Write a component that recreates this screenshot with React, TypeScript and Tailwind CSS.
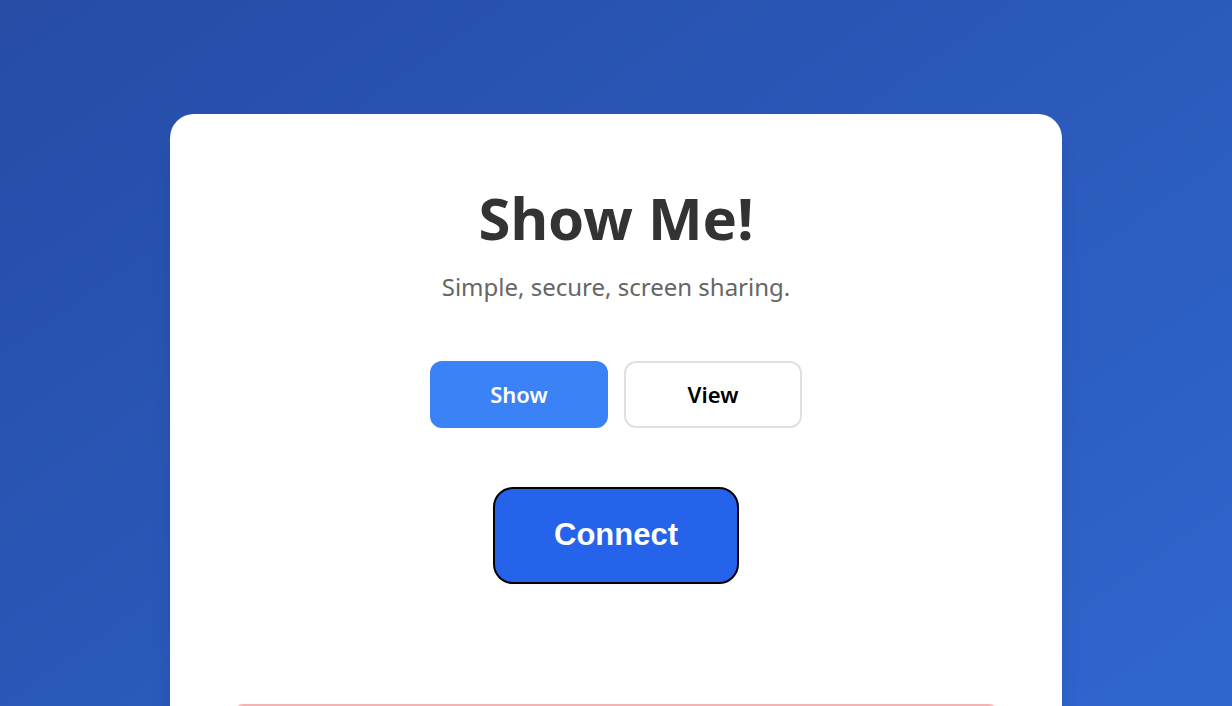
import React, { useState } from 'react';

function App() {
  const [mode, setMode] = useState<'show' | 'view'>('show');

  return (
    <div className="min-h-screen bg-gradient-to-br from-[#264ca6] to-[#3069d2] px-[170px] pt-[114px] pb-10 font-['Noto_Sans',sans-serif]">
      {/* Card */}
      <div className="bg-white rounded-[24px] shadow-xl px-[65px] pt-[72px] pb-12 flex flex-col items-center">
        <h1 className="text-[58px] leading-[64px] font-bold text-[#333333]">Show Me!</h1>
        <p className="mt-[21px] text-[24px] leading-[32px] text-[#666666]">Simple, secure, screen sharing.</p>

        {/* Mode toggle */}
        <div className="mt-[58px] flex gap-4">
          <button
            onClick={() => setMode('show')}
            className={`w-[178px] h-[67px] rounded-xl text-[22px] font-semibold border-2 ${
              mode === 'show' ? 'bg-[#3b82f6] border-[#3b82f6] text-white' : 'bg-white border-[#e0e0e0] text-black'
            }`}
          >
            Show
          </button>
          <button
            onClick={() => setMode('view')}
            className={`w-[178px] h-[67px] rounded-xl text-[22px] font-semibold border-2 ${
              mode === 'view' ? 'bg-[#3b82f6] border-[#3b82f6] text-white' : 'bg-white border-[#e0e0e0] text-black'
            }`}
          >
            View
          </button>
        </div>

        <button className="mt-[59px] w-[246px] h-[97px] rounded-[20px] border-2 border-black bg-[#2563eb] text-white text-[31px] font-bold font-['Liberation_Sans',Arial,sans-serif]">
          Connect
        </button>

        {/* Status */}
        <div className="mt-[120px] w-full rounded-lg border-2 border-[#f3b4b4] bg-[#fef2f2] px-4 pt-5 pb-4 text-[#b91c1c] text-base">
          Not connected.
        </div>
      </div>
    </div>
  );
}

export default App;
